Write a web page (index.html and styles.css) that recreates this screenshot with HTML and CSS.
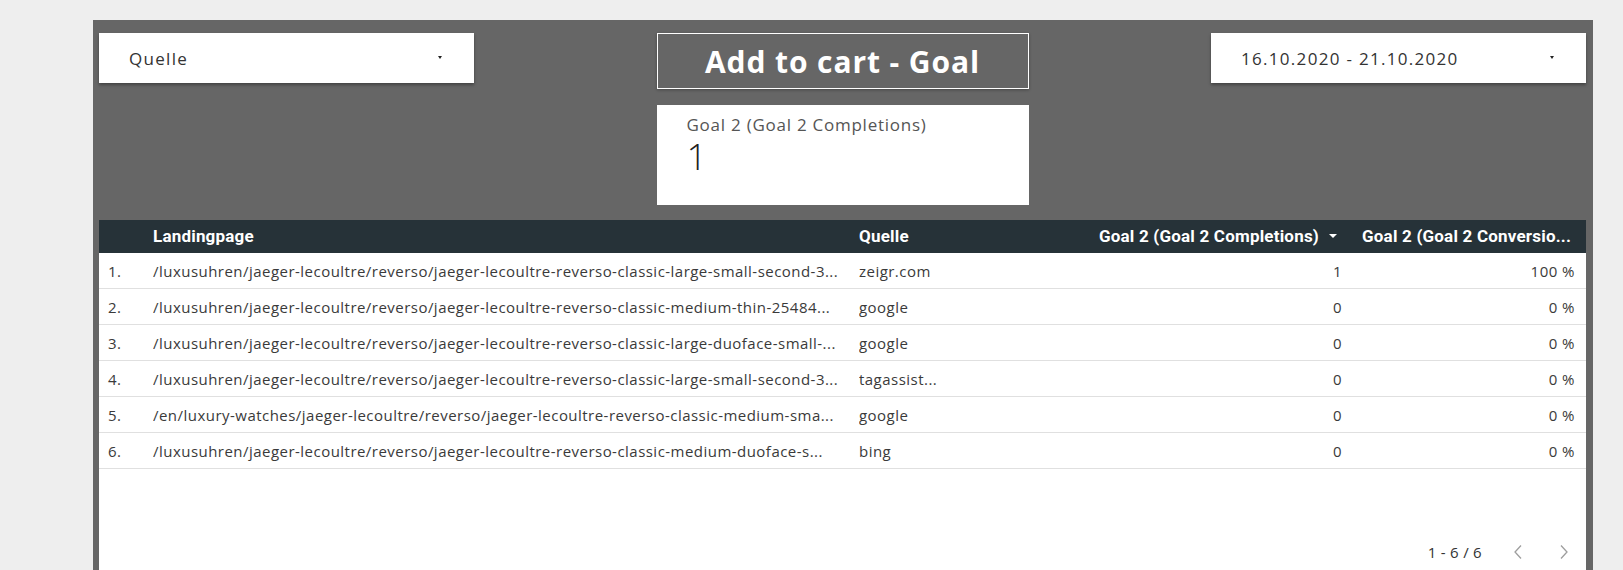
FILE: index.html
```html
<!DOCTYPE html>
<html lang="de">
<head>
<meta charset="utf-8">
<title>Add to cart - Goal</title>
<link rel="stylesheet" href="styles.css">
</head>
<body>
<div class="panel">
  <div class="top">
    <div class="dropdown">
      <span class="dd-label">Quelle</span>
      <span class="caret"></span>
    </div>
    <div class="center">
      <div class="title">Add to cart - Goal</div>
      <div class="scorecard">
        <div class="sc-label">Goal 2 (Goal 2 Completions)</div>
        <div class="sc-value">1</div>
      </div>
    </div>
    <div class="dropdown">
      <span class="dd-label">16.10.2020 - 21.10.2020</span>
      <span class="caret"></span>
    </div>
  </div>

  <div class="table">
    <div class="row head">
      <div class="c idx"></div>
      <div class="c land">Landingpage</div>
      <div class="c src">Quelle</div>
      <div class="c num">Goal 2 (Goal 2 Completions)<span class="sort"></span></div>
      <div class="c conv">Goal 2 (Goal 2 Conversio...</div>
    </div>
    <div class="row">
      <div class="c idx">1.</div>
      <div class="c land">/luxusuhren/jaeger-lecoultre/reverso/jaeger-lecoultre-reverso-classic-large-small-second-3...</div>
      <div class="c src">zeigr.com</div>
      <div class="c num">1</div>
      <div class="c conv">100 %</div>
    </div>
    <div class="row">
      <div class="c idx">2.</div>
      <div class="c land">/luxusuhren/jaeger-lecoultre/reverso/jaeger-lecoultre-reverso-classic-medium-thin-25484...</div>
      <div class="c src">google</div>
      <div class="c num">0</div>
      <div class="c conv">0 %</div>
    </div>
    <div class="row">
      <div class="c idx">3.</div>
      <div class="c land">/luxusuhren/jaeger-lecoultre/reverso/jaeger-lecoultre-reverso-classic-large-duoface-small-...</div>
      <div class="c src">google</div>
      <div class="c num">0</div>
      <div class="c conv">0 %</div>
    </div>
    <div class="row">
      <div class="c idx">4.</div>
      <div class="c land">/luxusuhren/jaeger-lecoultre/reverso/jaeger-lecoultre-reverso-classic-large-small-second-3...</div>
      <div class="c src">tagassist...</div>
      <div class="c num">0</div>
      <div class="c conv">0 %</div>
    </div>
    <div class="row">
      <div class="c idx">5.</div>
      <div class="c land">/en/luxury-watches/jaeger-lecoultre/reverso/jaeger-lecoultre-reverso-classic-medium-sma...</div>
      <div class="c src">google</div>
      <div class="c num">0</div>
      <div class="c conv">0 %</div>
    </div>
    <div class="row">
      <div class="c idx">6.</div>
      <div class="c land">/luxusuhren/jaeger-lecoultre/reverso/jaeger-lecoultre-reverso-classic-medium-duoface-s...</div>
      <div class="c src">bing</div>
      <div class="c num">0</div>
      <div class="c conv">0 %</div>
    </div>
    <div class="pager">
      <span class="range">1 - 6 / 6</span>
      <svg class="chev" width="10" height="16" viewBox="0 0 10 16"><path d="M8 1.5 L2 8 L8 14.5" fill="none" stroke="#9e9e9e" stroke-width="1.3"/></svg>
      <svg class="chev" width="10" height="16" viewBox="0 0 10 16"><path d="M2 1.5 L8 8 L2 14.5" fill="none" stroke="#9e9e9e" stroke-width="1.3"/></svg>
    </div>
  </div>
</div>
</body>
</html>
```

FILE: styles.css
```css
* { box-sizing: border-box; }
html, body { margin: 0; padding: 0; }
body {
  background: #eeeeee;
  font-family: "Open Sans", "Liberation Sans", sans-serif;
  color: #333;
  overflow: hidden;
  height: 570px;
}
.panel {
  margin: 20px 0 0 93px;
  width: 1500px;
  height: 600px;
  background: #666666;
  padding: 13px 7px 0 6px;
}
.top {
  display: flex;
  justify-content: space-between;
  align-items: flex-start;
}
.dropdown {
  width: 375px;
  height: 50px;
  background: #fff;
  box-shadow: 0 2px 3px rgba(0,0,0,0.35);
  display: flex;
  align-items: center;
  justify-content: space-between;
  padding: 0 32px 0 30px;
}
.dd-label {
  font-size: 17px;
  letter-spacing: 1.3px;
  color: #333;
}
.caret {
  width: 0; height: 0;
  border-left: 2.5px solid transparent;
  border-right: 2.5px solid transparent;
  border-top: 3px solid #222;
  margin-top: -2px;
}
.center {
  width: 372px;
  display: flex;
  flex-direction: column;
  gap: 16px;
}
.title {
  height: 56px;
  border: 1px solid #fff;
  box-shadow: 0 1px 3px rgba(0,0,0,0.3);
  color: #fff;
  font-weight: 700;
  font-size: 30px;
  letter-spacing: 0.9px;
  display: flex;
  align-items: center;
  justify-content: center;
}
.scorecard {
  height: 100px;
  background: #fff;
  padding: 9px 30px;
}
.sc-label {
  font-size: 17px;
  letter-spacing: 0.75px;
  color: #555;
  line-height: 22px;
}
.sc-value {
  margin-top: 2px;
  font-size: 36px;
  font-weight: 300;
  color: #222;
  line-height: 38px;
}
.table {
  margin-top: 15px;
  background: #fff;
  height: 400px;
}
.row {
  display: grid;
  grid-template-columns: 54px 706px 228px 265px 234px;
  height: 36px;
  border-bottom: 1px solid #e0e0e0;
  align-items: center;
  font-size: 15px;
  letter-spacing: 0.47px;
  color: #3a3a3a;
}
.row.head {
  height: 33px;
  border-bottom: none;
  background: #263238;
  color: #fff;
  font-family: Roboto, "Liberation Sans", sans-serif;
  font-weight: 700;
  font-size: 17px;
  letter-spacing: 0.2px;
  padding-bottom: 1px;
}
.c {
  white-space: nowrap;
  overflow: hidden;
}
.idx { padding-left: 9px; }
.land { padding-right: 10px; }
.num { text-align: right; padding-right: 10px; }
.head .num {
  padding-right: 15px;
  display: flex;
  justify-content: flex-end;
  align-items: center;
  gap: 10px;
}
.sort {
  flex: none;
  width: 0; height: 0;
  border-left: 4px solid transparent;
  border-right: 4px solid transparent;
  border-top: 4px solid #fff;
}
.conv { padding: 0 11px 0 10px; text-align: right; }
.head .conv { text-align: left; }
.pager {
  margin-top: 67px;
  display: flex;
  justify-content: flex-end;
  align-items: center;
  height: 32px;
  padding-right: 17px;
  font-size: 15px;
  letter-spacing: 0.3px;
  color: #333;
  gap: 36px;
}
.range { margin-right: -5px; }
.chev { display: block; }
```
